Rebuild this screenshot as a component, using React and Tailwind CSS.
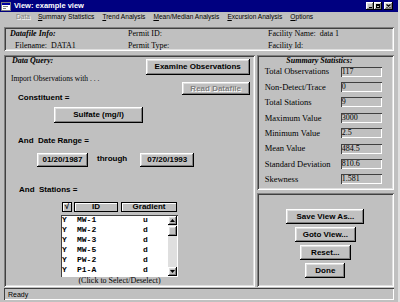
import React from 'react';

const serif = "font-['Liberation_Serif',serif]";
const sans = "font-['Liberation_Sans',Arial,sans-serif]";
const mono = "font-['Liberation_Mono',monospace]";

const raised =
    'bg-[#c0c0c0] shadow-[inset_-1px_-1px_0_#000,inset_1px_1px_0_#fff,inset_-2px_-2px_0_#808080,inset_2px_2px_0_#dfdfdf]';
const sunken =
    'shadow-[inset_1px_1px_0_#808080,inset_-1px_-1px_0_#fff,inset_2px_2px_0_#404040,inset_-2px_-2px_0_#dfdfdf]';
const field = 'shadow-[inset_1px_1px_0_#404040,inset_-1px_-1px_0_#fff]';

const stats = [
    ['Total Observations', '117'],
    ['Non-Detect/Trace', '0'],
    ['Total Stations', '9'],
    ['Maximum Value', '3000'],
    ['Minimum Value', '2.5'],
    ['Mean Value', '484.5'],
    ['Standard Deviation', '810.6'],
    ['Skewness', '1.581'],
];

const stations = [
    ['MW-1', 'u'],
    ['MW-2', 'd'],
    ['MW-3', 'd'],
    ['MW-5', 'd'],
    ['PW-2', 'd'],
    ['P1-A', 'd'],
];

const Button = ({ label, className = '', disabled = false }) => (
    <div
        className={`${raised} ${sans} flex items-center justify-center font-bold text-[8px] leading-none ${
            disabled ? 'text-[#808080] [text-shadow:1px_1px_0_#fff]' : 'text-black'
        } ${className}`}
    >
        {label}
    </div>
);

const MenuItem = ({ first, rest }) => (
    <span>
        <span className="underline">{first}</span>
        {rest}
    </span>
);

const App = () => {
    return (
        <div className="w-[400px] h-[302px] bg-[#c0c0c0] flex flex-col overflow-hidden border-r-2 border-r-[#dfdfdf]">
            {/* title bar */}
            <div className="h-[12px] bg-[#000080] flex items-center pl-[1px]">
                <svg width="10" height="9" viewBox="0 0 10 9">
                    <rect x="0.5" y="0.5" width="9" height="8" fill="#fff" stroke="#808080" />
                    <rect x="1" y="1" width="8" height="2" fill="#0000a0" />
                    <rect x="2" y="4" width="5" height="1" fill="#808080" />
                    <rect x="2" y="6" width="3" height="1" fill="#808080" />
                </svg>
                <span className={`${sans} ml-[3px] text-white font-bold text-[7.5px] leading-none`}>
                    View: example view
                </span>
                <div className="ml-auto mr-[5px] flex items-center">
                    <div className={`${raised} w-[8px] h-[8px] flex items-end justify-center pb-[2px]`}>
                        <div className="w-[3px] h-[1px] bg-black" />
                    </div>
                    <div className={`${raised} w-[8px] h-[8px] flex items-center justify-center`}>
                        <div className="w-[4px] h-[4px] border border-black border-t-2" />
                    </div>
                    <div className={`${raised} ml-[2px] w-[9px] h-[8px] flex items-center justify-center`}>
                        <svg width="5" height="4" viewBox="0 0 5 4">
                            <path d="M0.5 0.5 L4.5 3.5 M4.5 0.5 L0.5 3.5" stroke="#000" strokeWidth="1.2" />
                        </svg>
                    </div>
                </div>
            </div>

            {/* menu bar */}
            <div className={`${sans} h-[11px] flex items-center gap-[8px] pl-[16px] text-[6.6px] leading-none text-black`}>
                <span className="text-[#808080] [text-shadow:1px_1px_0_#fff]">Data</span>
                <MenuItem first="S" rest="ummary Statistics" />
                <MenuItem first="T" rest="rend Analysis" />
                <MenuItem first="M" rest="ean/Median Analysis" />
                <MenuItem first="E" rest="xcursion Analysis" />
                <MenuItem first="O" rest="ptions" />
            </div>

            <div className="flex flex-col px-[4px] pt-[4px] gap-[4px]">
                {/* datafile info */}
                <div className={`${sunken} ${serif} h-[24px] pt-[1px] pl-[6px] grid grid-cols-[118px_140px_1fr] text-[8px] leading-[11px] text-black`}>
                    <div className="font-bold italic">Datafile Info:</div>
                    <div>Permit ID:</div>
                    <div>Facility Name:&nbsp; data 1</div>
                    <div className="pl-[5px] whitespace-pre">Filename:  DATA1</div>
                    <div>Permit Type:</div>
                    <div>Facility Id:</div>
                </div>

                <div className="h-[232px] flex gap-[2px]">
                    {/* data query */}
                    <div className={`${sunken} w-[252px] flex flex-col`}>
                        <div className="flex justify-between items-start pl-[8px] pr-[5px] pt-[4px]">
                            <div className={`${serif} -mt-[3px] font-bold italic text-[8px] leading-[10px]`}>Data Query:</div>
                            <Button label="Examine Observations" className="w-[104px] h-[16px]" />
                        </div>
                        <div className="flex justify-between items-start pl-[7px] pr-[5px]">
                            <div className={`${serif} -mt-[1px] text-[7.5px] leading-[10px]`}>Import Observations with . . .</div>
                            <Button label="Read Datafile" disabled className="mt-[7px] w-[68px] h-[13px]" />
                        </div>
                        <div className={`${sans} -mt-[2px] pl-[14px] font-bold text-[8px] leading-[10px]`}>Constituent =</div>
                        <Button label="Sulfate (mg/l)" className="mt-[4px] ml-[50px] w-[89px] h-[16px]" />
                        <div className={`${sans} mt-[13px] pl-[14px] font-bold text-[8px] leading-[10px] whitespace-pre`}>
                            And  Date Range =
                        </div>
                        <div className="mt-[7px] flex items-center h-[14px]">
                            <Button label="01/20/1987" className="ml-[33px] w-[51px] h-[14px]" />
                            <span className={`${sans} ml-[9px] -mt-[2px] font-bold text-[8px]`}>through</span>
                            <Button label="07/20/1993" className="ml-[13px] w-[54px] h-[14px]" />
                        </div>
                        <div className={`${sans} mt-[18px] pl-[15px] font-bold text-[8px] leading-[10px] whitespace-pre`}>
                            And  Stations =
                        </div>
                        {/* table header */}
                        <div className={`${sans} mt-[7px] ml-[58px] flex h-[10px] font-bold text-[8px] leading-none`}>
                            <div className="w-[10px] border border-black shadow-[inset_1px_1px_0_#fff] flex items-center justify-center">
                                √
                            </div>
                            <div className="ml-[2px] w-[44px] border border-black shadow-[inset_1px_1px_0_#fff] flex items-center justify-center">
                                ID
                            </div>
                            <div className="ml-[3px] w-[56px] border border-black shadow-[inset_1px_1px_0_#fff] flex items-center justify-center">
                                Gradient
                            </div>
                        </div>
                        {/* list box */}
                        <div className={`${field} mt-[3px] ml-[57px] w-[117px] h-[62px] bg-white flex`}>
                            <div className={`${mono} flex-1 flex flex-col pl-[1px] font-bold text-[8px]`}>
                                {stations.map(([id, g]) => (
                                    <div key={id} className="h-[10px] flex items-center leading-none">
                                        <span className="w-[15px]">Y</span>
                                        <span className="w-[66px]">{id}</span>
                                        <span>{g}</span>
                                    </div>
                                ))}
                            </div>
                            <div className="w-[9px] my-[1px] mr-[1px] bg-[#dfdfdf] flex flex-col">
                                <div className={`${raised} h-[9px] flex items-center justify-center`}>
                                    <svg width="5" height="3" viewBox="0 0 5 3">
                                        <path d="M2.5 0 L5 3 L0 3 Z" fill="#000" />
                                    </svg>
                                </div>
                                <div className={`${raised} h-[10px] mt-[1px]`} />
                                <div className="flex-1" />
                                <div className={`${raised} h-[9px] flex items-center justify-center`}>
                                    <svg width="5" height="3" viewBox="0 0 5 3">
                                        <path d="M0 0 L5 0 L2.5 3 Z" fill="#000" />
                                    </svg>
                                </div>
                            </div>
                        </div>
                        <div className={`${serif} -mt-[1px] ml-[57px] w-[117px] text-center text-[8px] leading-[10px]`}>
                            (Click to Select/Deselect)
                        </div>
                    </div>

                    {/* right column */}
                    <div className="w-[138px] flex flex-col gap-[3px]">
                        <div className={`${sunken} ${serif} h-[135px] flex flex-col text-[8.5px]`}>
                            <div className="pt-[1px] pr-[12px] text-center font-bold italic text-[8px] leading-[10px]">
                                Summary Statistics:
                            </div>
                            <div className="-mt-[2px] flex flex-col">
                                {stats.map(([label, value]) => (
                                    <div key={label} className="h-[15.4px] flex items-center pl-[8px]">
                                        <span className="w-[76px] leading-none">{label}</span>
                                        <span className={`${field} w-[41px] h-[10px] pl-[1px] text-[8px] leading-[10px]`}>{value}</span>
                                    </div>
                                ))}
                            </div>
                        </div>
                        <div className={`${sunken} flex-1 flex flex-col items-center pt-[16px] gap-[3px]`}>
                            <Button label="Save View As..." className="w-[78px] h-[15px]" />
                            <Button label="Goto View..." className="w-[61px] h-[15px]" />
                            <Button label="Reset..." className="w-[51px] h-[15px]" />
                            <Button label="Done" className="w-[40px] h-[15px]" />
                        </div>
                    </div>
                </div>
            </div>

            {/* status bar */}
            <div className={`${field} ${sans} mt-[1px] mx-[4px] h-[12px] flex items-center pl-[4px] text-[7px] leading-none`}>
                Ready
            </div>
        </div>
    );
};

export default App;
